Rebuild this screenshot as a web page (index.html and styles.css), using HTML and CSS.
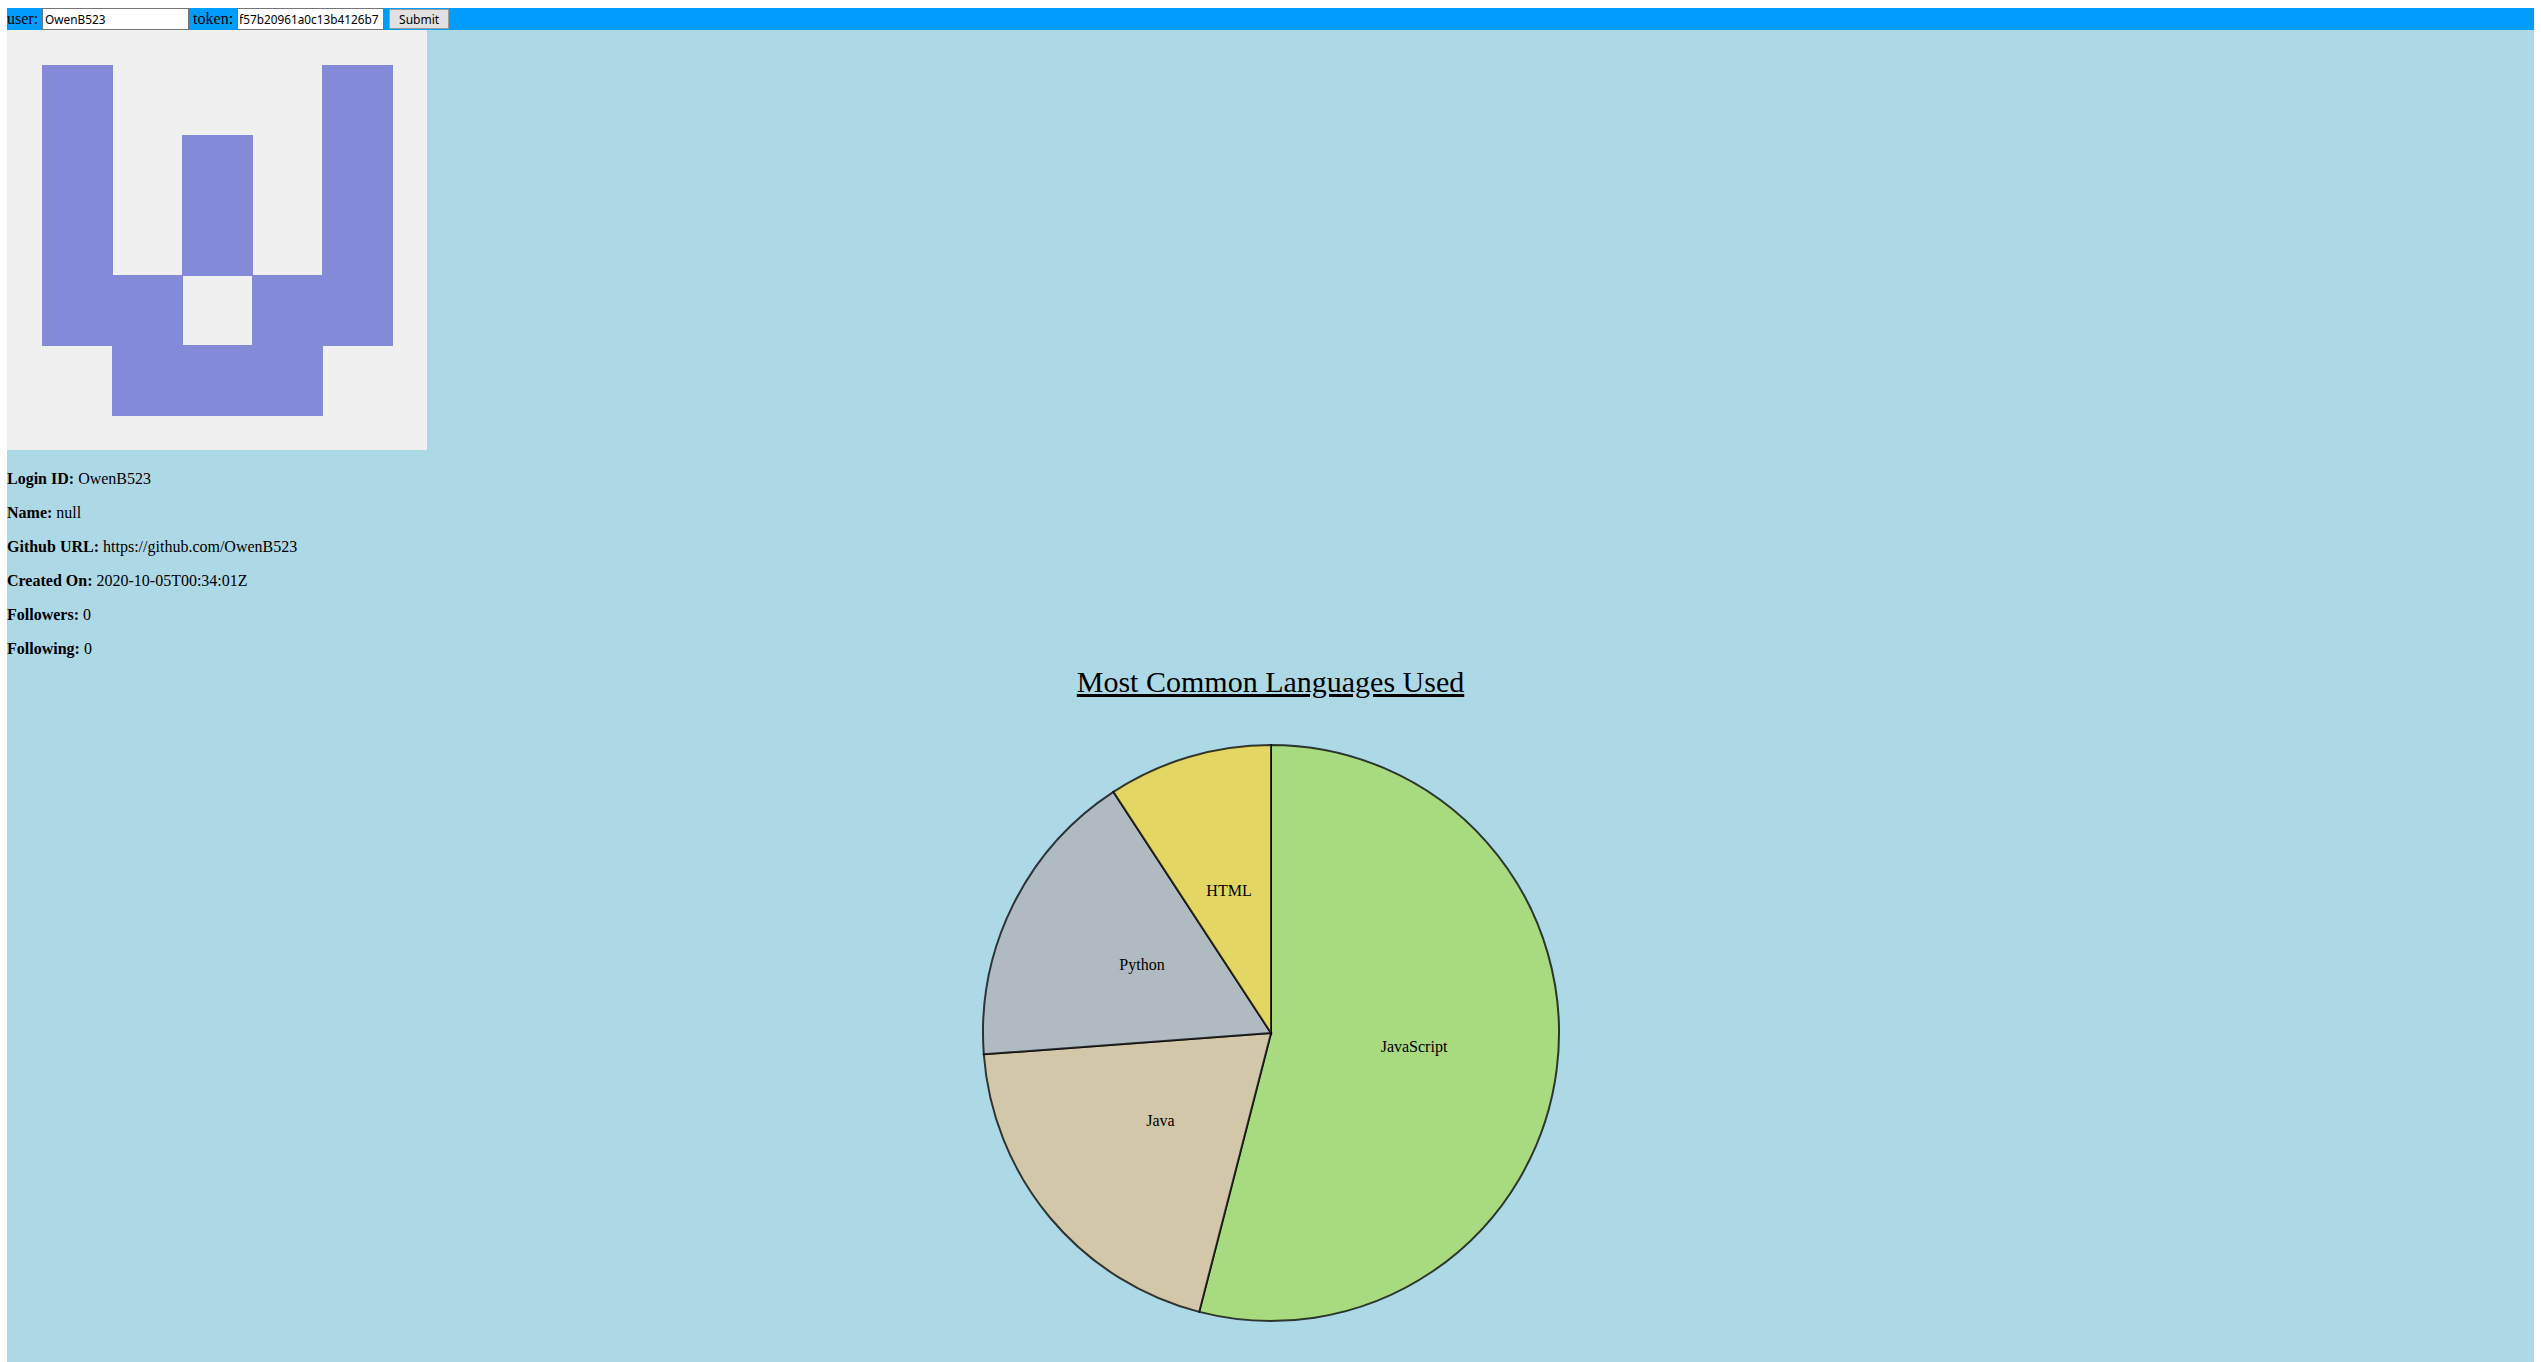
FILE: index.html
```html
<!DOCTYPE html>
<html lang="en">
  <head>
    <meta charset="UTF-8" />
    <title>Github Profile</title>
    <link rel="stylesheet" href="styles.css">
  </head>
  <body>
    <form class="top-bar">
      <label for="user-input">user:</label>
      <input id="user-input" class="field" type="text" value="OwenB523">
      <label for="token-input">token:</label>
      <input id="token-input" class="field token-field" type="text" value="f57b20961a0c13b4126b7">
      <button class="submit-button" type="button">Submit</button>
    </form>

    <svg class="avatar" width="420" height="420" viewBox="0 0 420 420" shape-rendering="crispEdges">
      <rect class="avatar-bg" width="420" height="420"></rect>
      <rect class="avatar-cell" x="35" y="35" width="71" height="281"></rect>
      <rect class="avatar-cell" x="105" y="245" width="71" height="141"></rect>
      <rect class="avatar-cell" x="175" y="105" width="71" height="141"></rect>
      <rect class="avatar-cell" x="175" y="315" width="71" height="71"></rect>
      <rect class="avatar-cell" x="245" y="245" width="71" height="141"></rect>
      <rect class="avatar-cell" x="315" y="35" width="71" height="281"></rect>
    </svg>

    <p class="info"><b>Login ID:</b> OwenB523</p>
    <p class="info"><b>Name:</b> null</p>
    <p class="info"><b>Github URL:</b> https://github.com/OwenB523</p>
    <p class="info"><b>Created On:</b> 2020-10-05T00:34:01Z</p>
    <p class="info"><b>Followers:</b> 0</p>
    <p class="info"><b>Following:</b> 0</p>

    <h1 class="chart-title">Most Common Languages Used</h1>

    <svg class="pie" width="600" height="600" viewBox="-300 -300 600 600">
      <path class="slice slice-js" d="M0 0V-288A288 288 0 1 1 -71.8 278.9Z"></path>
      <path class="slice slice-java" d="M0 0L-71.8 278.9A288 288 0 0 1 -287.2 21.3Z"></path>
      <path class="slice slice-python" d="M0 0L-287.2 21.3A288 288 0 0 1 -157.6 -241.1Z"></path>
      <path class="slice slice-html" d="M0 0L-157.6 -241.1A288 288 0 0 1 0 -288Z"></path>
      <text x="143" y="19">JavaScript</text>
      <text x="-110.5" y="93">Java</text>
      <text x="-129" y="-63">Python</text>
      <text x="-42" y="-137">HTML</text>
    </svg>
  </body>
</html>
```

FILE: styles.css
```css
html {
  background-color: white;
}
body {
  margin: 8px 7px 0 7px;
  min-height: calc(100vh - 8px);
  background-color: lightblue;
  font-family: "Liberation Serif", "Times New Roman", serif;
  font-size: 16px;
}
.top-bar {
  display: flex;
  align-items: center;
  height: 22px;
  background-color: #009dff;
  color: black;
}
.field {
  box-sizing: border-box;
  width: 147px;
  height: 22px;
  margin: 0 4px;
  padding: 1px 2px;
  border: 1px solid #767676;
  background-color: white;
  font-family: "Noto Sans", sans-serif;
  font-size: 11.8px;
}
.token-field {
  text-indent: -1px;
}
.submit-button {
  box-sizing: border-box;
  width: 60px;
  height: 20px;
  margin-left: 1px;
  padding: 0;
  border: 1px solid #9a9a9a;
  border-radius: 0;
  background-color: #e1e1e1;
  color: black;
  font-family: "Noto Sans", sans-serif;
  font-size: 12px;
}
.avatar-bg {
  fill: #f0f0f0;
}
.avatar-cell {
  fill: #838ad8;
}
.info {
  margin: 16px 0 0 0;
  line-height: 18px;
}
.chart-title {
  margin: 7px 0 0 0;
  font-size: 30px;
  font-weight: normal;
  line-height: 34px;
  text-align: center;
  text-decoration: underline;
}
.pie {
  display: block;
  margin: 34px auto 0 auto;
}
.pie text {
  font-family: "Liberation Serif", "Times New Roman", serif;
  font-size: 16px;
  text-anchor: middle;
}
.slice {
  stroke: black;
  stroke-width: 2;
  stroke-opacity: 0.75;
}
.slice-js {
  fill: #a8da7f;
}
.slice-java {
  fill: #d3c7aa;
}
.slice-python {
  fill: #b0bbc1;
}
.slice-html {
  fill: #e3d662;
}
```
